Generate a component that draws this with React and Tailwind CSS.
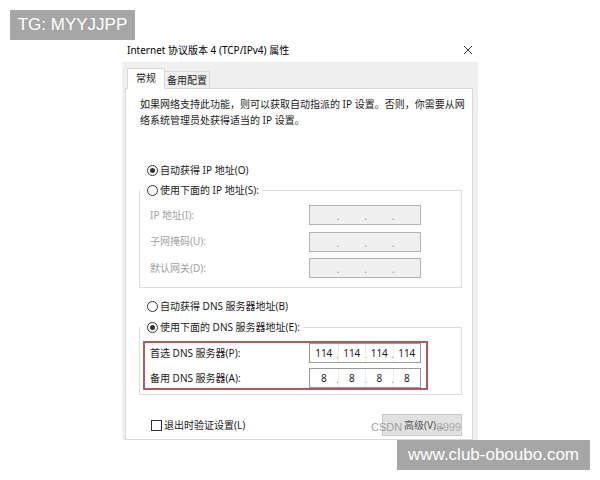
const font = { fontFamily: '"Noto Sans", "Noto Sans CJK SC", sans-serif' };

function Radio({ checked, label }) {
  return (
    <div className="flex h-[16px] items-center gap-[2px] pl-[7px] text-[10px] text-[#1a1a1a]">
      <span className="flex h-[11px] w-[11px] items-center justify-center rounded-full border border-[#333]">
        {checked && <span className="h-[5px] w-[5px] rounded-full bg-[#333]" />}
      </span>
      <span>{label}</span>
    </div>
  );
}

function IpBox({ values, disabled }) {
  const parts = values || ['', '', '', ''];
  return (
    <div
      className={`grid h-[20px] w-[112px] grid-cols-4 border text-[10px] ${
        disabled ? 'border-[#b4b4b4] bg-[#f0f0f0] text-[#9a9a9a]' : 'border-[#9a9a9a] bg-white text-[#1a1a1a]'
      }`}
    >
      {parts.map((v, i) => (
        <div
          key={i}
          className={`relative flex items-center justify-center ${
            !disabled && i > 0 ? 'border-l border-[#ececec]' : ''
          }`}
        >
          {v}
          {i < 3 && (
            <span className="absolute right-[-2px] top-[3px] text-[10px]">.</span>
          )}
        </div>
      ))}
    </div>
  );
}

export default function App() {
  return (
    <div className="relative h-[480px] w-[600px] overflow-hidden bg-white" style={font}>
      {/* watermark top */}
      <div
        className="absolute left-[10px] top-[10px] flex h-[30px] w-[125px] items-center justify-center bg-[#a6a6a6] text-[17px] text-white"
        style={{ fontFamily: '"Liberation Sans", sans-serif' }}
      >
        TG: MYYJJPP
      </div>

      <div className="ml-[122px] mt-[38px] flex h-[402px] w-[356px] flex-col overflow-hidden bg-white">
        {/* title bar */}
        <div className="flex h-[24px] items-center justify-between pl-[5px] pr-[4px] text-[10px] text-black">
          <span>Internet 协议版本 4 (TCP/IPv4) 属性</span>
          <svg width="10" height="10" viewBox="0 0 10 10" className="mr-[1px]">
            <path d="M1 1L9 9M9 1L1 9" stroke="#333" strokeWidth="1" />
          </svg>
        </div>

        {/* body */}
        <div className="flex flex-1 flex-col bg-[#f0f0f0] pl-[3px] pr-[5px] pt-[6px]">
          <div className="flex h-[20px] items-end pl-[2px] text-[10px] text-[#1a1a1a]">
            <div className="relative z-10 -mb-px flex h-[21px] w-[38px] items-center justify-center border border-b-0 border-[#d9d9d9] bg-white pb-[2px]">
              常规
            </div>
            <div className="flex h-[17px] w-[45px] items-center justify-center border border-b-0 border-l-0 border-[#d9d9d9] bg-[#f0f0f0]">
              备用配置
            </div>
          </div>

          <div className="flex-1 border border-[#d9d9d9] bg-white pl-[14px] pt-[7px]">
            <p className="text-[10px] leading-[16px] text-[#1a1a1a]">
              如果网络支持此功能，则可以获取自动指派的 IP 设置。否则，你需要从网
              <br />
              络系统管理员处获得适当的 IP 设置。
            </p>

            <div className="mt-[34px]">
              <Radio checked label="自动获得 IP 地址(O)" />
            </div>

            <fieldset className="-ml-px mt-[4px] w-[323px] border border-[#dcdcdc] pb-[9px]">
              <legend className="pr-[3px]">
                <Radio label="使用下面的 IP 地址(S):" />
              </legend>
              <div className="mt-[7px] flex flex-col gap-[6.5px] pl-[10px] text-[10px] text-[#a0a0a0]">
                <div className="grid grid-cols-[159px_112px] items-center">
                  <span>IP 地址(I):</span>
                  <IpBox disabled />
                </div>
                <div className="grid grid-cols-[159px_112px] items-center">
                  <span>子网掩码(U):</span>
                  <IpBox disabled />
                </div>
                <div className="grid grid-cols-[159px_112px] items-center">
                  <span>默认网关(D):</span>
                  <IpBox disabled />
                </div>
              </div>
            </fieldset>

            <div className="mt-[10px]">
              <Radio label="自动获得 DNS 服务器地址(B)" />
            </div>

            <fieldset className="-ml-px mt-[5px] w-[323px] border border-[#dcdcdc] pb-[4px]">
              <legend className="pr-[3px]">
                <Radio checked label="使用下面的 DNS 服务器地址(E):" />
              </legend>
              <div className="ml-[3px] mt-[6px] flex w-[285px] flex-col gap-[5px] border-2 border-[#b4575e] px-[5px] text-[10px] text-[#1a1a1a]">
                <div className="grid grid-cols-[159px_112px] items-center">
                  <span>首选 DNS 服务器(P):</span>
                  <IpBox values={['114', '114', '114', '114']} />
                </div>
                <div className="grid grid-cols-[159px_112px] items-center">
                  <span>备用 DNS 服务器(A):</span>
                  <IpBox values={['8', '8', '8', '8']} />
                </div>
              </div>
            </fieldset>

            <div className="mt-[19px] flex h-[22px] w-[322px] items-center justify-between">
              <div className="flex items-center gap-[2px] pl-[11px] text-[10px] text-[#1a1a1a]">
                <span className="h-[11px] w-[11px] border border-[#333]" />
                <span>退出时验证设置(L)</span>
              </div>
              <div className="relative flex h-[22px] w-[80px] items-center justify-center border border-[#c8c8c8] bg-[#e1e1e1] pl-[4px] text-[10px] text-[#555]">
                高级(V)...
                {/* CSDN watermark lying over the button */}
                <span
                  className="absolute left-[-12px] top-[4px] text-[11px] text-[#a0a0a0]"
                  style={{ fontFamily: '"Liberation Sans", sans-serif' }}
                >
                  CSDN
                </span>
                <span
                  className="absolute right-[0px] top-[4px] text-[11px] text-[#a8a8a8]"
                  style={{ fontFamily: '"Liberation Sans", sans-serif' }}
                >
                  8999
                </span>
              </div>
            </div>
          </div>
        </div>
      </div>

      {/* watermark bottom */}
      <div
        className="absolute left-[397px] top-[440px] flex h-[30px] w-[193px] items-center justify-center bg-[#a6a6a6] text-[17px] text-white"
        style={{ fontFamily: '"Liberation Sans", sans-serif' }}
      >
        www.club-oboubo.com
      </div>
    </div>
  );
}
